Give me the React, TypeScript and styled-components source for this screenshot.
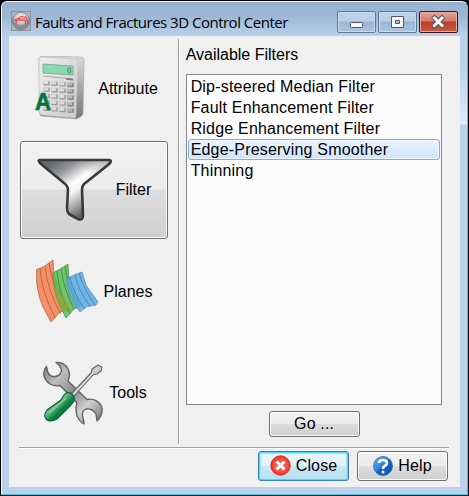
import React from 'react';
import styled, { createGlobalStyle, css } from 'styled-components';

const GlobalStyle = createGlobalStyle`
  * { box-sizing: border-box; }
  html, body { margin: 0; padding: 0; overflow: hidden; background: #000; }
`;

const Frame = styled.div`
  width: 469px;
  height: 496px;
  background: #000;
  padding: 1px 1px 1px 1px;
  font-family: 'Liberation Sans', Arial, sans-serif;
  font-size: 16px;
  color: #000;
`;

const Window = styled.div`
  width: 467px;
  height: 494px;
  border: 1px solid;
  border-color: #f4f8fc #40cbe5 #40cbe5 #edf5fc;
  border-radius: 6px 6px 0 0;
  background:
    linear-gradient(#b9d1ea00 0, #b9d1ea00 60px, #dcebf8 122px, #b9d1ea 123px) right 0 top 0 / 7px 100% no-repeat,
    linear-gradient(#99b4d1 0, #9cb7d5 14px, #b9d1ea 34px);
  padding: 0 6px 0 7px;
`;

const TitleBar = styled.header`
  height: 34px;
  display: flex;
  align-items: flex-start;
  padding: 9px 3px 0 2px;
`;

const Title = styled.h1`
  margin: 0 auto 0 4px;
  font: 400 15px/22px 'Open Sans', sans-serif;
  letter-spacing: -0.5px;
  white-space: nowrap;
`;

const CaptionButtons = styled.div`
  display: flex;
  gap: 2px;
`;

const CaptionButton = styled.button<{ $danger?: boolean }>`
  width: 39px;
  height: 22px;
  padding: 0;
  display: flex;
  border: 1px solid ${(p) => (p.$danger ? '#43131d' : '#60779a')};
  border-radius: 2px;
  box-shadow: inset 0 0 0 1px ${(p) => (p.$danger ? '#e7aaa0' : '#c6dbee')};
  background: ${(p) =>
    p.$danger
      ? 'linear-gradient(#e5a69b 0, #d47769 9px, #b9402b 10px, #c75b43 100%)'
      : 'linear-gradient(#bfd4e9 0, #b6cee6 9px, #98b5d3 10px, #abc6e0 100%)'};
`;

const Client = styled.main`
  width: 451px;
  height: 451px;
  background: #f0f0f0;
  padding: 3px 12px 6px 10px;
`;

const Workspace = styled.div`
  display: flex;
  height: 405px;
`;

const Sidebar = styled.nav`
  width: 160px;
  height: 405px;
  padding-left: 1px;
  border-right: 1px solid #a0a0a0;
  box-shadow: 1px 0 #fff;
  display: grid;
  grid-template-columns: 148px;
  grid-template-rows: 98px 98px 98px 98px;
  row-gap: 3.5px;
`;

const buttonFace = css`
  border: 1px solid #707070;
  border-radius: 3px;
  box-shadow: inset 0 0 0 1px #fafafa;
  background: linear-gradient(#f2f2f2 0, #ebebeb 49%, #dddddd 50%, #cfcfcf 100%);
`;

const NavButton = styled.button<{ $active?: boolean }>`
  display: flex;
  align-items: center;
  justify-content: center;
  gap: 4px;
  padding: 0;
  font: inherit;
  color: inherit;
  border: 1px solid transparent;
  background: none;
  svg { flex: none; display: block; }
  ${(p) => p.$active && buttonFace}
`;

const NavLabel = styled.span`
  line-height: 20px;
  padding-top: 1px;
`;

const FilterPanel = styled.section`
  width: 263px;
  margin-left: 7px;
  display: flex;
  flex-direction: column;
`;

const PanelTitle = styled.label`
  height: 35px;
  line-height: 31px;
`;

const List = styled.ul`
  width: 256px;
  height: 331px;
  margin: 0;
  padding: 1px;
  list-style: none;
  background: #fcfcfc;
  border: 1px solid #828790;
  letter-spacing: 0.19px;
`;

const ListItem = styled.li<{ $selected?: boolean }>`
  height: 21px;
  line-height: 19px;
  padding-left: 2px;
  border: 1px solid transparent;
  border-radius: 3px;
  white-space: nowrap;
  ${(p) =>
    p.$selected &&
    css`
      border-color: #84acdd;
      box-shadow: inset 0 0 0 1px #eff6fe;
      background: linear-gradient(#ebf4fe, #cfe4fe);
    `}
`;

const PushButton = styled.button<{ $default?: boolean; $height: number }>`
  ${buttonFace}
  width: 91px;
  height: ${(p) => p.$height}px;
  padding: 0 0 1px;
  display: flex;
  align-items: center;
  justify-content: center;
  gap: 5px;
  font: inherit;
  letter-spacing: 0.15px;
  color: inherit;
  svg { flex: none; }
  ${(p) =>
    p.$default &&
    css`
      border-color: #3c7fb1;
      box-shadow: inset 0 0 0 1px #46d8fb, inset 0 0 0 2px #a5e5f8;
      background: linear-gradient(#edf6fb 0, #e1f1f9 49%, #cde7f4 50%, #b9dff2 100%);
    `}
`;

const GoRow = styled.div`
  display: flex;
  padding: 6px 0 0 83px;
`;

const Footer = styled.footer`
  width: 430px;
  margin-top: 3px;
  margin-right: -1px;
  border-top: 1px solid #a0a0a0;
  box-shadow: inset 0 1px #fff;
  padding: 3px 1px 0 0;
  display: flex;
  justify-content: flex-end;
  gap: 8px;
`;

function AppIcon() {
  return (
    <svg width="20" height="20" viewBox="0 0 20 20">
      <defs>
        <radialGradient id="orb" cx=".5" cy=".3">
          <stop stopColor="#f2eeee" />
          <stop offset=".65" stopColor="#cbc9ca" />
          <stop offset="1" stopColor="#8b8c8f" />
        </radialGradient>
      </defs>
      <rect x=".5" y=".5" width="19" height="19" fill="#a9b8c9" stroke="#8793a0" />
      <circle cx="10" cy="10" r="8.8" fill="url(#orb)" stroke="#777b80" strokeWidth=".7" />
      <path d="M3.5 9L7 7.5L10 5.5L15 6L16 9L17 12.5M3.5 9.5L8 9L15.5 9.5M6 9.5L4.5 13M14.5 10V13.5M7 8.3L14 7.5" fill="none" stroke="#e65355" strokeWidth="1.2" />
    </svg>
  );
}

function CalculatorIcon() {
  const keys = [0, 1, 2, 3, 4].flatMap((r) => [0, 1, 2, 3].map((c) => ({ r, c })));
  return (
    <svg width="64" height="64" viewBox="0 0 64 64">
      <defs>
        <linearGradient id="case" x2="1" y2="1">
          <stop stopColor="#efefef" />
          <stop offset="1" stopColor="#c9c9c9" />
        </linearGradient>
        <linearGradient id="side" x2="0" y2="1">
          <stop stopColor="#dedede" />
          <stop offset=".5" stopColor="#a7a7a7" />
          <stop offset="1" stopColor="#777" />
        </linearGradient>
      </defs>
      <path d="M9 2Q10 0 13 0L49 1Q54 1 54 4L53 58Q52 61 46 63L11 60Q9 58 10 54Z" fill="url(#side)" stroke="#aaa" strokeWidth=".7" />
      <path d="M9 3Q9 1 12 1L46 3Q49 3 48 6L46 60Q46 63 43 62L12 59Q9 58 9 55Z" fill="url(#case)" stroke="#b9b9b9" strokeWidth=".6" />
      <path d="M13 8L43 10V19L13 17Z" fill="#8cd9af" stroke="#68a98a" strokeWidth=".8" />
      <ellipse cx="39.3" cy="14.5" rx="1.5" ry="2.8" fill="none" stroke="#428463" strokeWidth="1" />
      <path d="M13 20L43 23" stroke="#aaa" />
      <path d="M36 23L43 23.6" stroke="#777" strokeWidth="1.7" />
      {keys.map(({ r, c }) => (
        <g key={`${r}-${c}`} transform={`translate(${13.5 + c * 8} ${25 + r * 6.4 + c * 0.6})`}>
          <rect width="6.3" height="4.4" rx=".7" fill={c === 3 ? '#858585' : '#9d9d9d'} />
          <rect width="4.8" height="3" rx=".5" fill={c === 3 ? '#b7b7b7' : '#dddddd'} />
        </g>
      ))}
      <text x="5" y="54" fontFamily="Liberation Sans, Arial, sans-serif" fontWeight="700" fontSize="24" fill="#087342" stroke="#087342" strokeWidth=".7" textLength="16" lengthAdjust="spacingAndGlyphs">A</text>
    </svg>
  );
}

function FunnelIcon() {
  return (
    <svg width="75" height="64" viewBox="0 0 75 64">
      <defs>
        <linearGradient id="metal" gradientUnits="userSpaceOnUse" x1="14" y1="6" x2="50" y2="60">
          <stop stopColor="#67696c" />
          <stop offset=".2" stopColor="#97989b" />
          <stop offset=".43" stopColor="#fff" />
          <stop offset=".55" stopColor="#f2f2f2" />
          <stop offset=".9" stopColor="#65686b" />
        </linearGradient>
        <linearGradient id="rim" gradientUnits="userSpaceOnUse" x1="52" y1="18" x2="68" y2="2">
          <stop stopColor="#55585b" stopOpacity="0" />
          <stop offset="1" stopColor="#55585b" stopOpacity=".45" />
        </linearGradient>
      </defs>
      <path d="M3 2H72Q75 2 73 5L71 7L47 26Q45 28 45 32L46 57Q46 63 41 61L32 56Q30 54 30 50L31 32Q31 28 27 25L4 6Q0 2 3 2Z" fill="url(#metal)" />
      <path d="M3 2H72Q75 2 73 5L71 7L47 26Q45 28 45 32L46 57Q46 63 41 61L32 56Q30 54 30 50L31 32Q31 28 27 25L4 6Q0 2 3 2Z" fill="url(#rim)" stroke="#38393a" strokeWidth="2.6" strokeLinejoin="round" />
    </svg>
  );
}

function PlanesIcon() {
  return (
    <svg width="64" height="64" viewBox="0 0 64 64">
      <g stroke="#996048" strokeWidth=".7">
        <path d="M0 11L9 7L17 1L18 15L25 36L35 51L24 53L15 63L7 48Q0 32 0 11Z" fill="#f69064" />
        <path d="M4 9Q5 31 19 59M9 7Q11 31 25 55M13 4Q16 25 30 53" fill="none" stroke="#9b5741" />
      </g>
      <g stroke="#4d8d49" strokeWidth=".7">
        <path d="M17 14L24 10L32 5L33 19L38 34L45 47L38 50L30 59L23 45Q17 31 17 14Z" fill="#55bd4f" fillOpacity=".84" />
        <path d="M21 12Q23 35 34 55M25 10Q28 31 38 50M29 7Q32 28 42 48" fill="none" stroke="#317437" />
      </g>
      <path d="M18 25L24 34L34 48L31 51L24 48Q18 37 18 25Z" fill="#99a33b" opacity=".65" />
      <path d="M30 20L38 16L46 13L50 26L62 43L60 46L50 48L44 53Q32 40 30 20Z" fill="#58a9df" fillOpacity=".84" stroke="#538ab0" strokeWidth=".7" />
      <path d="M34 18Q38 36 49 50M39 16Q43 33 54 47M43 14Q47 29 59 46" fill="none" stroke="#397bae" strokeWidth=".8" />
    </svg>
  );
}

function ToolsIcon() {
  return (
    <svg width="64" height="64" viewBox="0 0 64 64">
      <defs>
        <linearGradient id="steel" x2="1" y2="1">
          <stop stopColor="#6e7072" />
          <stop offset=".25" stopColor="#bebebf" />
          <stop offset=".5" stopColor="#858789" />
          <stop offset=".72" stopColor="#d0d0d0" />
          <stop offset="1" stopColor="#66696b" />
        </linearGradient>
        <linearGradient id="grip" x2="1" y2="1">
          <stop stopColor="#168349" />
          <stop offset=".4" stopColor="#69bf8d" />
          <stop offset=".58" stopColor="#0b8042" />
          <stop offset="1" stopColor="#075b31" />
        </linearGradient>
      </defs>
      <path d="M5.5 5.5Q2 9 3 15C5 22 12 26 19 24.5L36 42Q34 47 36 55Q39 61 43 63Q43 60 42 57Q40 50 45 48Q51 47 55 53L56 60Q62 54 61 47C59 40 52 37 46 38.5L27 20Q30 14 27 8C24 2 20 1 15 1.5Q20 5 20.5 10Q19 15 14 15.5Q8 16 6.5 10Z" fill="url(#steel)" stroke="#5d6062" strokeWidth="1.3" strokeLinejoin="round" />
      <path d="M30 33L50 12L51 8L57 4L61 6L60 10L56 13L52 14L33 35Z" fill="#c5c6c6" stroke="#64676a" strokeWidth="1.1" strokeLinejoin="round" />
      <path d="M32 34L52 12M54 10L58 7" stroke="#f0f0f0" strokeWidth="1" />
      <path d="M23 34Q26 30 31 33Q34 36 33 40L29 45L16 58Q9 62 5 58Q2 54 6 49L20 39Z" fill="url(#grip)" stroke="#076434" strokeWidth="1.2" />
      <path d="M8 52L25 37" stroke="#93d7ad" strokeWidth="2" opacity=".65" />
    </svg>
  );
}

function CloseIcon() {
  return (
    <svg width="21" height="21" viewBox="0 0 21 21">
      <defs>
        <radialGradient id="red"><stop stopColor="#ed704d" /><stop offset=".65" stopColor="#eb5744" /><stop offset="1" stopColor="#f0292d" /></radialGradient>
      </defs>
      <circle cx="10.5" cy="10.5" r="9.7" fill="url(#red)" stroke="#e9292b" />
      <path d="M6.5 6.5L14.5 14.5M14.5 6.5L6.5 14.5" stroke="#fff" strokeWidth="3" />
    </svg>
  );
}

function HelpIcon() {
  return (
    <svg width="20" height="20" viewBox="0 0 20 20">
      <defs>
        <linearGradient id="blue" x2="1" y2="1"><stop stopColor="#65b4ef" /><stop offset=".48" stopColor="#3183d1" /><stop offset=".5" stopColor="#1463c1" /><stop offset="1" stopColor="#0756ae" /></linearGradient>
      </defs>
      <circle cx="10" cy="10" r="9.5" fill="url(#blue)" stroke="#2472bd" strokeWidth=".8" />
      <path d="M6 7Q6 4 10 4Q14 4 14 7Q14 9 11.5 10.2Q10 11 10 13" fill="none" stroke="#fff" strokeWidth="2.6" />
      <circle cx="10" cy="16" r="1.5" fill="#fff" />
    </svg>
  );
}

const sections = [
  { label: 'Attribute', icon: <CalculatorIcon /> },
  { label: 'Filter', icon: <FunnelIcon />, active: true },
  { label: 'Planes', icon: <PlanesIcon /> },
  { label: 'Tools', icon: <ToolsIcon /> },
];

const filters = [
  'Dip-steered Median Filter',
  'Fault Enhancement Filter',
  'Ridge Enhancement Filter',
  'Edge-Preserving Smoother',
  'Thinning',
];

export default function App() {
  return (
    <Frame>
      <GlobalStyle />
      <Window>
        <TitleBar>
          <AppIcon />
          <Title>Faults and Fractures 3D Control Center</Title>
          <CaptionButtons>
            <CaptionButton aria-label="Minimize">
              <svg width="37" height="20"><rect x="12.5" y="10.5" width="12" height="5" rx="1" fill="#f7f7f7" stroke="#535666" /></svg>
            </CaptionButton>
            <CaptionButton aria-label="Maximize">
              <svg width="37" height="20"><path d="M12.5 4.5H24.5V15.5H12.5ZM16.5 8.5V11.5H20.5V8.5Z" fill="#f7f7f7" fillRule="evenodd" stroke="#535666" /></svg>
            </CaptionButton>
            <CaptionButton $danger aria-label="Close window">
              <svg width="37" height="20">
                <path d="M14.5 6L22 13.5M22 6L14.5 13.5" stroke="#535666" strokeWidth="4.8" strokeLinecap="square" />
                <path d="M14.5 6L22 13.5M22 6L14.5 13.5" stroke="#f7f7f7" strokeWidth="3" strokeLinecap="square" />
              </svg>
            </CaptionButton>
          </CaptionButtons>
        </TitleBar>
        <Client>
          <Workspace>
            <Sidebar>
              {sections.map((s) => (
                <NavButton key={s.label} $active={s.active}>
                  {s.icon}
                  <NavLabel>{s.label}</NavLabel>
                </NavButton>
              ))}
            </Sidebar>
            <FilterPanel>
              <PanelTitle>Available Filters</PanelTitle>
              <List>
                {filters.map((name) => (
                  <ListItem key={name} $selected={name === 'Edge-Preserving Smoother'}>{name}</ListItem>
                ))}
              </List>
              <GoRow><PushButton $height={26}>Go ...</PushButton></GoRow>
            </FilterPanel>
          </Workspace>
          <Footer>
            <PushButton $height={30} $default><CloseIcon />Close</PushButton>
            <PushButton $height={30}><HelpIcon />Help</PushButton>
          </Footer>
        </Client>
      </Window>
    </Frame>
  );
}
